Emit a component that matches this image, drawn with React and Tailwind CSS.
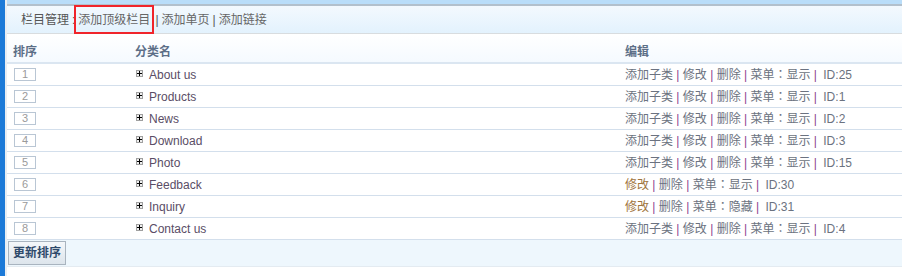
import React from 'react'

const rows = [
	{ no: 1, name: 'About us', sub: true, menu: '显示', id: 25 },
	{ no: 2, name: 'Products', sub: true, menu: '显示', id: 1 },
	{ no: 3, name: 'News', sub: true, menu: '显示', id: 2 },
	{ no: 4, name: 'Download', sub: true, menu: '显示', id: 3 },
	{ no: 5, name: 'Photo', sub: true, menu: '显示', id: 15 },
	{ no: 6, name: 'Feedback', sub: false, menu: '显示', id: 30 },
	{ no: 7, name: 'Inquiry', sub: false, menu: '隐藏', id: 31 },
	{ no: 8, name: 'Contact us', sub: true, menu: '显示', id: 4 },
]

const Pipe = () => <span className="text-[#8b3f8f]"> | </span>

// 全角冒号居中显示
const Colon = () => <span style={{ fontFamily: '"Noto Sans CJK TC", sans-serif' }}>：</span>

const PlusIcon = () => (
	<span className="relative top-[-1px] mr-[6px] inline-flex h-[7px] w-[7px] items-center justify-center border border-[#a0a0a0] bg-[#eeeeee]">
		<svg width="5" height="5" viewBox="0 0 5 5">
			<path d="M0 2.5h5M2.5 0v5" stroke="#000" strokeWidth="1" />
		</svg>
	</span>
)

const App = () => {
	return (
		<div
			className="flex h-[276px] w-[902px] bg-white text-[12px] text-[#555]"
			style={{ fontFamily: '"Liberation Sans", Arial, "Noto Sans CJK SC", sans-serif' }}
		>
			{/* 左侧蓝条 */}
			<div className="w-[5px] bg-[#1c7ad8]" />
			<div className="w-[2px] bg-[#e9eef3]" />

			<div className="flex flex-1 flex-col">
				<div className="h-[4px] bg-[#b9ddf9]" />
				<div className="h-[2px] bg-[#b2c0cc]" />

				{/* 顶部菜单 */}
				<div className="flex h-[28px] items-center border-b border-[#d8dcdf] bg-gradient-to-b from-[#f3f9fe] to-[#e3f2fd] pl-[14px] text-[#555]">
					<span>栏目管理</span>
					<span className="ml-[3px]">:</span>
					<span className="ml-[-1px] flex h-[29px] items-center border-2 border-[#f0242b] px-[2px] text-[#666]">添加顶级栏目</span>
					<span className="pl-[1px] pr-[3px]">|</span>
					<span className="text-[#666]">添加单页</span>
					<span className="px-[3px]">|</span>
					<span className="text-[#666]">添加链接</span>
				</div>

				{/* 表头 */}
				<div className="flex h-[30px] items-end border-b-2 border-[#dbe6f1] bg-gradient-to-b from-white to-[#f5faff] pb-[1px] font-bold text-[#5d6f87]">
					<div className="w-[128px] pl-[6px]">排序</div>
					<div className="w-[490px]">分类名</div>
					<div>编辑</div>
				</div>

				{rows.map((r) => (
					<div key={r.no} className="flex h-[22px] items-center border-b border-[#d3dfec]">
						<div className="w-[128px] pl-[7px]">
							<div className="flex h-[13px] w-[22px] items-center justify-center border border-[#b9c6d4] text-[11px] leading-none text-[#9a9a9a]">
								{r.no}
							</div>
						</div>
						<div className="flex w-[490px] items-center pl-[1px] text-[#5a4d66]">
							<PlusIcon />
							<span>{r.name}</span>
						</div>
						<div className="text-[#6b7280]">
							{r.sub && (
								<>
									<span>添加子类</span>
									<Pipe />
								</>
							)}
							<span className={r.sub ? '' : 'text-[#a0743c]'}>修改</span>
							<Pipe />
							<span>删除</span>
							<Pipe />
							<span>
								菜单
								<Colon />
								{r.menu}
							</span>
							<Pipe />
							<span className="ml-[3px]">ID:{r.id}</span>
						</div>
					</div>
				))}

				{/* 底部按钮 */}
				<div className="flex h-[27px] items-center border-b border-[#e4ebf1] bg-[#eef7fd] pl-[1px]">
					<button className="h-[24px] border border-[#a9b4bf] bg-gradient-to-b from-[#f4f7fa] to-[#dde5ec] px-[4px] font-bold text-[#2f4a6b]">
						更新排序
					</button>
				</div>
			</div>
		</div>
	)
}

export default App
